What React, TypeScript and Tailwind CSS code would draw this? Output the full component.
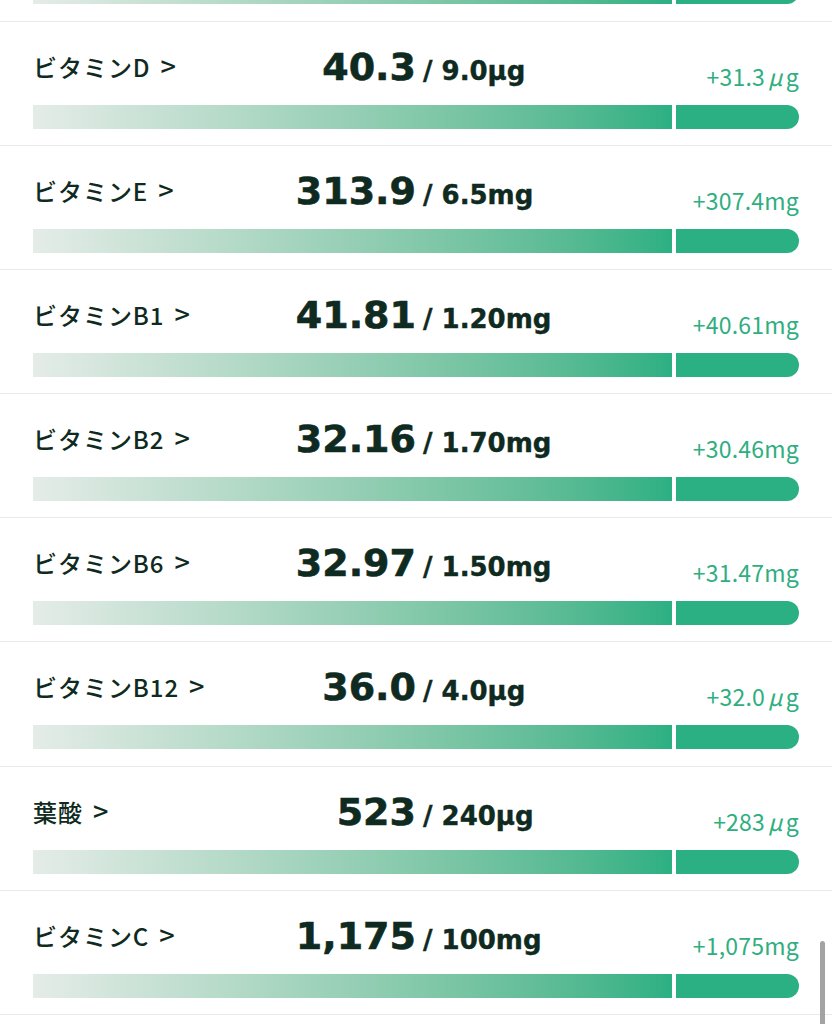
type Nutrient = {
  name: string;
  value: string;
  unit: string;
  diff: string;
};

const nutrients: Nutrient[] = [
  { name: "ビタミンD", value: "40.3", unit: "/ 9.0μg", diff: "+31.3μg" },
  { name: "ビタミンE", value: "313.9", unit: "/ 6.5mg", diff: "+307.4mg" },
  { name: "ビタミンB1", value: "41.81", unit: "/ 1.20mg", diff: "+40.61mg" },
  { name: "ビタミンB2", value: "32.16", unit: "/ 1.70mg", diff: "+30.46mg" },
  { name: "ビタミンB6", value: "32.97", unit: "/ 1.50mg", diff: "+31.47mg" },
  { name: "ビタミンB12", value: "36.0", unit: "/ 4.0μg", diff: "+32.0μg" },
  { name: "葉酸", value: "523", unit: "/ 240μg", diff: "+283μg" },
  { name: "ビタミンC", value: "1,175", unit: "/ 100mg", diff: "+1,075mg" },
];

const jp = "font-['Noto_Sans_CJK_JP',sans-serif]";
const num = "font-['DejaVu_Sans','Noto_Sans_CJK_JP',sans-serif]";

function ProgressBar() {
  return (
    <div className="h-[24px] flex gap-[4px]">
      <div className="flex-1 bg-gradient-to-r from-[#e5ece8] to-[#2bb083]" />
      <div className="w-[123px] bg-[#2bb083] rounded-r-full" />
    </div>
  );
}

// 超過分の「μ」は全角っぽく間隔をあけて表示
function Diff({ text }: { text: string }) {
  const [head, tail] = text.split("μ");
  if (tail === undefined) return <>{text}</>;
  return (
    <>
      {head}
      <span className="inline-block italic px-[3px]">μ</span>
      {tail}
    </>
  );
}

function NutrientRow({ item }: { item: Nutrient }) {
  return (
    <div className="h-[124.2px] border-t border-[#e9e9e9] px-[33px] flex flex-col">
      {/* 上段: 名前・摂取量・超過分 */}
      <div className="h-[83px] grid grid-cols-2">
        <div className="flex justify-between items-start">
          <span
            className={`${jp} pt-[32px] text-[24px] leading-[24px] font-medium tracking-[0.04em] text-[#0f2a20] whitespace-nowrap`}
          >
            {item.name}
            <span className="ml-[10px] text-[27px]">&gt;</span>
          </span>
          <span
            className={`${num} pt-[26px] text-[38px] leading-[38px] font-bold text-[#0f2a20] [-webkit-text-stroke:0.6px]`}
          >
            {item.value}
          </span>
        </div>
        <div className="flex justify-between items-start pl-[7px]">
          <span
            className={`${num} pt-[36px] text-[26px] leading-[26px] font-bold text-[#0f2a20] [-webkit-text-stroke:0.4px]`}
          >
            {item.unit}
          </span>
          <span
            className={`${jp} pt-[43px] text-[23px] leading-[23px] tracking-[0.01em] text-[#2fae80] whitespace-nowrap`}
          >
            <Diff text={item.diff} />
          </span>
        </div>
      </div>

      <ProgressBar />
    </div>
  );
}

export default function App() {
  return (
    <div className="relative h-[1024px] w-full overflow-hidden bg-white">
      <div className="-mt-[20px] px-[33px] pb-[16.5px]">
        <ProgressBar />
      </div>
      {nutrients.map((n) => (
        <NutrientRow key={n.name} item={n} />
      ))}
      <div className="border-t border-[#e9e9e9] h-[20px]" />

      {/* スクロールバー */}
      <div className="absolute right-[7px] top-[941px] w-[5px] h-[100px] rounded-full bg-[#a3a3a3]" />
    </div>
  );
}
